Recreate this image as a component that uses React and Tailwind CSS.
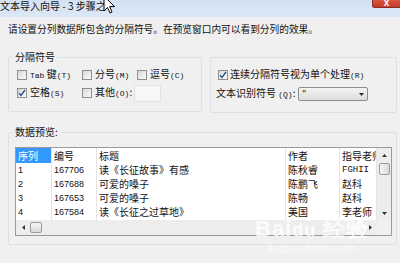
import React from 'react'

const COLS = [36, 45, 189, 54, 37]
const HEAD = ['序列', '编号', '标题', '作者', '指导老师']
const ROWS = [
  ['1', '167706', '读《长征故事》有感', '陈秋睿', 'FGHII'],
  ['2', '167688', '可爱的嗓子', '陈鹏飞', '赵科'],
  ['3', '167653', '可爱的嗓子', '陈畅', '赵科'],
  ['4', '167584', '读《长征之过草地》', '美国', '李老师'],
]

function Check({ checked }) {
  return (
    <span className="w-[10px] h-[10px] shrink-0 border border-[#8e8f8f] bg-linear-to-br from-[#d8d8d8] to-[#fbfbfb] flex items-center justify-center">
      {checked && (
        <svg width="8" height="8" viewBox="0 0 8 8">
          <path d="M1 4.2 L3 6.4 L7 1" fill="none" stroke="#27508f" strokeWidth="1.4" />
        </svg>
      )}
    </span>
  )
}

function Key({ children }) {
  return <span className="text-[8px] font-['Liberation_Mono',monospace]">{children}</span>
}

function Option({ checked, width, children }) {
  return (
    <div className={`flex items-center gap-[3px] ${width}`}>
      <Check checked={checked} />
      <span className="whitespace-nowrap">{children}</span>
    </div>
  )
}

function Arrow({ dir }) {
  const d = {
    up: 'M0 3 L2.5 0 L5 3 Z',
    down: 'M0 0 L5 0 L2.5 3 Z',
    left: 'M3 0 L3 5 L0 2.5 Z',
    right: 'M0 0 L3 2.5 L0 5 Z',
  }[dir]
  const vertical = dir === 'up' || dir === 'down'
  return (
    <svg width={vertical ? 5 : 3} height={vertical ? 3 : 5} viewBox={vertical ? '0 0 5 3' : '0 0 3 5'}>
      <path d={d} fill="#333" />
    </svg>
  )
}

export default function App() {
  return (
    <div className="relative w-[400px] h-[263px] overflow-hidden bg-[#f0f0f0] text-[#111] text-[10px] leading-[12px] font-['Noto_Sans_CJK_SC','Noto_Sans',sans-serif]">

      {/* Title bar */}
      <div className="h-[17px] flex items-start justify-between bg-linear-to-b from-[#d3e2f3] to-[#dbe7f5]">
        <span className="text-[10px] leading-[12px] whitespace-nowrap">文本导入向导 - 3 步骤之</span>
        <div className="w-[28px] h-[8px] rounded-bl-[3px] bg-linear-to-b from-[#d9563f] to-[#c43c2c] border-l border-b border-[#8f2a22] flex justify-center overflow-hidden">
          <span className="text-white text-[10px] leading-[6px] font-bold font-['Liberation_Sans',sans-serif]">x</span>
        </div>
      </div>

      {/* Instruction */}
      <p className="mt-[6px] pl-[8px] whitespace-nowrap text-[9.7px] leading-[13px]">
        请设置分列数据所包含的分隔符号。在预览窗口内可以看到分列的效果。
      </p>

      {/* Delimiters */}
      <div className="mt-[15px] flex items-start">
        <fieldset className="ml-[8px] w-[194px] h-[61px] border border-[#d9e1e6] rounded-[2px]">
          <legend className="ml-[4px] px-[2px] text-[10px] leading-[12px]">分隔符号</legend>
          <div className="mt-[6px] pl-[8px] flex flex-col gap-[6px]">
            <div className="flex items-center h-[12px]">
              <Option width="w-[65px]">
                <span className="font-['Liberation_Mono',monospace] text-[8px]">Tab</span> 键<Key>(T)</Key>
              </Option>
              <Option width="w-[55px]">分号<Key>(M)</Key></Option>
              <Option width="w-[55px]">逗号<Key>(C)</Key></Option>
            </div>
            <div className="flex items-center h-[12px]">
              <Option checked width="w-[65px]">空格<Key>(S)</Key></Option>
              <Option width="">其他<Key>(O)</Key>:</Option>
              <div className="ml-[2px] w-[27px] h-[17px] border border-[#e2e2e2] bg-[#f7f7f7]" />
            </div>
          </div>
        </fieldset>

        <div className="mt-[6px] ml-[8px] w-[187px] h-[56px] border border-[#d9e1e6] rounded-[2px] pt-[11px] flex flex-col gap-[6px]">
          <div className="pl-[7px] flex items-center gap-[2px] h-[12px]">
            <Check checked />
            <span className="whitespace-nowrap">连续分隔符号视为单个处理<Key>(R)</Key></span>
          </div>
          <div className="pl-[5px] flex items-center h-[14px]">
            <span className="whitespace-nowrap w-[82px]">文本识别符号 <Key>(Q)</Key>:</span>
            <div className="w-[70px] h-[14px] border border-[#8d8d8d] rounded-[2px] bg-linear-to-b from-[#f5f5f5] to-[#dcdcdc] flex items-center justify-between px-[3px]">
              <span className="text-[9px] leading-[9px] self-start mt-[1px]">"</span>
              <Arrow dir="down" />
            </div>
          </div>
        </div>
      </div>

      {/* Data preview */}
      <fieldset className="mt-[13px] ml-[8px] w-[389px] h-[119px] border border-[#d9e1e6] rounded-[2px]">
        <legend className="ml-[4px] px-[2px] text-[10px] leading-[12px]">数据预览:</legend>
        <div className="mt-[9px] ml-[6px] w-[377px] h-[89px] border border-[#9a9a9a] bg-white flex flex-col">
          <div className="flex h-[72px]">
            <div className="flex">
              {COLS.map((w, c) => (
                <div key={c} style={{ width: w }} className="flex flex-col border-r border-[#e4e4e4] overflow-hidden">
                  <div className={`h-[15px] px-[2px] leading-[15px] whitespace-nowrap ${c === 0 ? 'bg-[#3399ff] text-white' : ''}`}>
                    {HEAD[c]}
                  </div>
                  {ROWS.map((r, i) => (
                    <div
                      key={i}
                      className={`h-[14px] px-[2px] leading-[14px] whitespace-nowrap ${c < 2 ? "text-[9px] font-['Liberation_Sans',sans-serif]" : ''} ${c === 4 && i === 0 ? "font-['Liberation_Mono',monospace] text-[9px]" : ''}`}
                    >
                      {r[c]}
                    </div>
                  ))}
                </div>
              ))}
            </div>
            <div className="w-[14px] bg-[#ededed] flex flex-col items-center">
              <div className="h-[14px] flex items-center"><Arrow dir="up" /></div>
              <div className="w-[11px] h-[12px] mt-[1px] border border-[#9a9a9a] rounded-[2px] bg-linear-to-r from-[#f6f6f6] to-[#dadada]" />
              <div className="flex-1" />
              <div className="h-[14px] flex items-center"><Arrow dir="down" /></div>
            </div>
          </div>
          <div className="flex h-[15px]">
            <div className="w-[361px] bg-[#ededed] flex items-center">
              <div className="w-[14px] flex justify-center"><Arrow dir="left" /></div>
              <div className="w-[12px] h-[11px] border border-[#9a9a9a] rounded-[2px] bg-linear-to-b from-[#f6f6f6] to-[#dadada]" />
              <div className="flex-1" />
              <div className="w-[14px] flex justify-center"><Arrow dir="right" /></div>
            </div>
            <div className="w-[14px] bg-[#f0f0f0]" />
          </div>
        </div>
      </fieldset>

      {/* Cursor */}
      <svg className="absolute left-[103px] top-[-5px]" width="14" height="20" viewBox="0 0 14 20">
        <path d="M1 1 L1 16 L4.5 12.5 L7 18 L9 17 L6.7 11.6 L11.5 11.6 Z" fill="#fff" stroke="#000" strokeWidth="1" />
      </svg>

      {/* Watermark */}
      <div className="absolute left-[255px] top-[217px] flex flex-col items-center text-white/80 pointer-events-none">
        <span className="text-[22px] leading-[24px] font-bold font-['Liberation_Sans',sans-serif] tracking-[1px]">Bai<span className="text-[18px]">du</span> 经验</span>
        <span className="text-[11px] leading-[12px] font-['Liberation_Sans',sans-serif] text-white/70">jingyan.baidu.com</span>
      </div>
    </div>
  )
}
